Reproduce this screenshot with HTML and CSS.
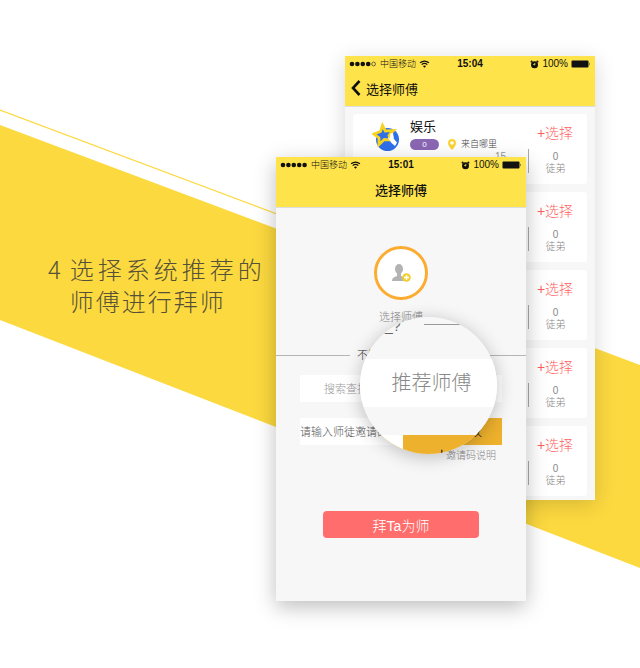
FILE: index.html
```html
<!DOCTYPE html>
<html lang="zh-CN">
<head>
<meta charset="utf-8">
<title>选择师傅</title>
<link rel="stylesheet" href="styles.css">
</head>
<body>
<svg class="defs" aria-hidden="true">
  <symbol id="wifi" viewBox="0 0 12 9"><path d="M1 3.2Q6-.9 11 3.2M2.8 5.2Q6 2.6 9.2 5.2" fill="none" stroke="#111" stroke-width="1.4"/><path d="M4.2 6.7Q6 5.400 7.800 6.700L6 8.600z" fill="#111"/></symbol>
  <symbol id="alarm" viewBox="0 0 9 9"><circle cx="4.500" cy="4.800" r="3.500" fill="#111"/><path d="M.8 2.300 2.300.9M8.200 2.300 6.700.9" stroke="#111" stroke-width="1.500"/><path d="M4.800 2.900V5L3.200 4.300" fill="none" stroke="#fee34b" stroke-width=".9"/></symbol>
  <symbol id="battery" viewBox="0 0 20 8"><rect x=".5" y=".5" width="17" height="7" rx="1" fill="#111"/><path d="M18.300 2.500Q19.700 4 18.300 5.500z" fill="#111"/></symbol>
  <symbol id="dots5" viewBox="0 0 28 6"><g fill="#111"><circle cx="3" cy="3" r="2.300"/><circle cx="8.400" cy="3" r="2.300"/><circle cx="13.800" cy="3" r="2.300"/><circle cx="19.200" cy="3" r="2.300"/><circle cx="24.600" cy="3" r="2.300"/></g></symbol>
  <symbol id="dots4" viewBox="0 0 28 6"><g fill="#111"><circle cx="3" cy="3" r="2.300"/><circle cx="8.400" cy="3" r="2.300"/><circle cx="13.800" cy="3" r="2.300"/><circle cx="19.200" cy="3" r="2.300"/></g><circle cx="24.600" cy="3" r="1.900" fill="none" stroke="#333" stroke-width=".7"/></symbol>
</svg>
<main class="scene">
  <svg class="band" viewBox="0 0 640 668" preserveAspectRatio="none" aria-hidden="true">
    <path d="M0 125 640 365V568L0 320z" fill="#fcd93f"/>
    <path d="M0 110 290 219" stroke="#fcd93f" stroke-width="1.200"/>
  </svg>
  <h1 class="headline"><span>4</span><span><span class="wide">选择系统推荐的</span><br>师傅进行拜师</span></h1>

  <section class="phone phone-back">
    <header class="top">
      <div class="status">
        <div class="carrier"><svg class="dots"><use href="#dots4"/></svg>中国移动<svg class="wifi"><use href="#wifi"/></svg></div>
        <b>15:04</b>
        <div class="power"><svg class="alarm"><use href="#alarm"/></svg>100%<svg class="battery"><use href="#battery"/></svg></div>
      </div>
      <div class="nav nav-left"><svg class="back" viewBox="0 0 10 16"><path d="M8.500 1 2 8l6.500 7" fill="none" stroke="#111" stroke-width="2.600"/></svg>选择师傅</div>
    </header>
    <div class="list">
      <article class="card">
        <svg class="avatar" viewBox="0 0 28 30"><circle cx="15.500" cy="17.500" r="11.500" fill="#2f6fe8"/><path d="M10.500 3.500 13.300 9 21.500 8.500 17 13.300 18 18 12.300 17.500 7 22.500 7 16 2 12 8.500 9.500z" fill="#2f6fe8" stroke="#f8d420" stroke-width="2.800"/><path d="M15.500 15 17.500 16.500 18.500 11.500 21 11 22 17 25 20.500 23 24 19.500 21z" fill="#fff"/></svg>
        <div class="who"><h2>娱乐</h2><div class="meta"><span class="pill">0</span><svg class="pin" viewBox="0 0 8 11"><path d="M4 0a4 4 0 0 1 4 4Q8 7 4 11 0 7 0 4a4 4 0 0 1 4-4z" fill="#fbd335"/><circle cx="4" cy="4" r="1.800" fill="#fff"/></svg>来自哪里</div><span class="age">15</span></div>
        <div class="side"><button>+选择</button><p>0<br>徒弟</p></div>
      </article>
      <article class="card"><div class="side"><button>+选择</button><p>0<br>徒弟</p></div></article>
      <article class="card"><div class="side"><button>+选择</button><p>0<br>徒弟</p></div></article>
      <article class="card"><div class="side"><button>+选择</button><p>0<br>徒弟</p></div></article>
      <article class="card"><div class="side"><button>+选择</button><p>0<br>徒弟</p></div></article>
    </div>
  </section>

  <section class="phone phone-front">
    <header class="top">
      <div class="status">
        <div class="carrier"><svg class="dots"><use href="#dots5"/></svg>中国移动<svg class="wifi"><use href="#wifi"/></svg></div>
        <b>15:01</b>
        <div class="power"><svg class="alarm"><use href="#alarm"/></svg>100%<svg class="battery"><use href="#battery"/></svg></div>
      </div>
      <div class="nav">选择师傅</div>
    </header>
    <form class="form">
      <div class="picker">
        <span class="ring"><svg viewBox="0 0 20 20"><g fill="#b3b3b3"><ellipse cx="8" cy="6" rx="4" ry="5"/><path d="M6 9h4v4l4 1.500Q15.500 15.500 15.500 18H1Q1 15 3 14.200L6 13z"/></g><circle cx="15.500" cy="14.500" r="4.300" fill="#f2cf2e"/><path d="M15.500 12v5M13 14.500h5" stroke="#fff" stroke-width="1.400"/></svg></span>
        <span>选择师傅</span>
      </div>
      <div class="divider"><span>不知道选择谁呢？</span></div>
      <input class="search" type="text" aria-label="搜索查找" placeholder="搜索查找师傅">
      <div class="invite"><input type="text" aria-label="邀请码" placeholder="请输入师徒邀请码"><button type="button">接收</button></div>
      <a class="help" href="#">邀请码说明</a>
      <button class="submit" type="button">拜Ta为师</button>
    </form>
    <div class="lens">
      <div class="lens-top"><span>_?</span><i></i></div>
      <div class="lens-mid">推荐师傅</div>
      <div class="lens-low"><span>接收</span></div>
    </div>
  </section>
</main>
</body>
</html>
```
FILE: styles.css
```css
* { box-sizing: border-box; }
body { margin: 0; background: #fff; font-family: "Liberation Sans", "Noto Sans CJK SC", sans-serif; font-weight: 300; color: #111; }
button, input { font: inherit; border: 0; padding: 0; margin: 0; }
h1, h2, p { margin: 0; font-weight: inherit; }
svg { display: block; flex: none; }
.defs { position: absolute; width: 0; height: 0; }
.scene { position: relative; min-height: 668px; overflow: hidden; }
.band { position: absolute; inset: 0; width: 100%; height: 100%; }
.headline { position: absolute; left: 48px; top: 253px; display: flex; gap: 7px; font-family: "Noto Sans CJK SC", sans-serif; font-size: 24px; line-height: 32px; letter-spacing: 2px; color: #555038; white-space: nowrap; }
.wide { letter-spacing: 4px; }

.phone { position: absolute; width: 250px; min-height: 444px; background: #f7f7f7; }
.phone-back { left: 345px; top: 56px; box-shadow: 0 4px 20px rgba(0, 0, 0, .16); }
.phone-front { left: 276px; top: 157px; box-shadow: 0 6px 20px rgba(0, 0, 0, .26); }
.top { background: #fee34b; border-bottom: 1px solid #dedede; }
.status { display: grid; grid-template-columns: 1fr auto 1fr; align-items: center; height: 16px; padding: 0 4px; font-size: 10px; line-height: 16px; }
.status b { font-weight: 700; }
.carrier, .power { display: flex; align-items: center; gap: 3px; font-size: 9px; white-space: nowrap; }
.power { justify-content: flex-end; font-size: 10px; }
.dots { width: 28px; height: 6px; }
.wifi { width: 11px; height: 8px; }
.alarm { width: 9px; height: 9px; }
.battery { width: 20px; height: 8px; }
.nav { display: flex; align-items: center; justify-content: center; height: 34px; padding-bottom: 2px; font-size: 13px; font-weight: 500; }
.nav-left { justify-content: flex-start; gap: 5px; padding-left: 6px; font-weight: 400; }
.back { width: 10px; height: 16px; }

.list { display: grid; gap: 8px; padding: 7px 8px 3px; }
.card { display: flex; height: 70px; background: #fff; border-radius: 3px; }
.avatar { width: 28px; height: 30px; margin: 8px 10px 0 19px; }
.who { padding-top: 3px; }
.who h2 { font-size: 13px; line-height: 20px; font-weight: 400; }
.meta { display: flex; align-items: center; font-size: 9px; line-height: 14px; color: #444; white-space: nowrap; }
.pill { width: 29px; height: 11px; margin-right: 9px; border-radius: 6px; background: #8a66b3; color: #fff; font-size: 8px; line-height: 11px; text-align: center; }
.pin { width: 8px; height: 11px; margin-right: 5px; }
.age { display: block; padding-left: 85px; font-size: 10px; line-height: 12px; color: #999; }
.side { margin-left: auto; width: 59px; padding-top: 9px; text-align: center; }
.side button { display: block; width: 100%; padding-right: 5px; background: none; color: #ff5f5f; font-size: 14px; line-height: 20px; white-space: nowrap; }
.side p { margin-top: 6px; border-left: 1px solid #aaa; padding: 2px 5px 0 0; height: 24px; font-size: 10px; line-height: 12px; color: #888; }

.form { display: flex; flex-direction: column; padding: 38px 24px 0; }
.picker { display: flex; flex-direction: column; align-items: center; gap: 10px; font-size: 11px; line-height: 14px; color: #888; }
.ring { display: grid; place-items: center; width: 54px; height: 54px; border: 3px solid #fbac31; border-radius: 50%; background: #fff; }
.ring svg { width: 20px; height: 20px; }
.divider { display: flex; align-items: center; gap: 7px; margin: 23px -24px 12px; font-size: 11px; line-height: 16px; color: #333; white-space: nowrap; }
.divider::before, .divider::after { content: ""; flex: 1; height: 1px; background: #b5b5b5; }
.search { width: 100%; height: 27px; padding-left: 24px; background: #fff; font-size: 11px; }
.invite { display: flex; height: 27px; margin-top: 16px; font-size: 11px; }
.invite input { flex: 1; min-width: 0; height: 27px; background: #fff; }
.invite button { width: 82px; padding: 0 0 4px 16px; background: #eeb12d; font-size: 13px; }
input::placeholder { color: #999; opacity: 1; }
.invite input::placeholder { color: #555; }
.help { align-self: flex-end; margin-right: 6px; padding-top: 4px; font-size: 10px; line-height: 14px; color: #888; text-decoration: none; }
.submit { align-self: center; width: 156px; height: 27px; margin-top: 48px; border-radius: 4px; background: #ff6d6d; color: #fff; font-size: 14px; }

.lens { position: absolute; left: 84px; top: 160px; width: 137px; height: 137px; border-radius: 50%; overflow: hidden; background: #f7f7f7; box-shadow: 0 3px 18px rgba(0, 0, 0, .24); white-space: nowrap; }
.lens-top { display: flex; height: 42px; padding-left: 25px; font-size: 14px; line-height: 18px; color: #666; }
.lens-top span { width: 39px; }
.lens-top i { width: 73px; height: 1px; margin-top: 7px; background: #999; }
.lens-mid { height: 48px; padding-left: 6px; background: #fff; color: #888; font-size: 20px; line-height: 48px; text-align: center; }
.lens-low { height: 19px; margin-top: 28px; border-left: 43px solid #fff; background: #eeb12d; font-size: 24px; line-height: 54px; padding-left: 34px; }
```
